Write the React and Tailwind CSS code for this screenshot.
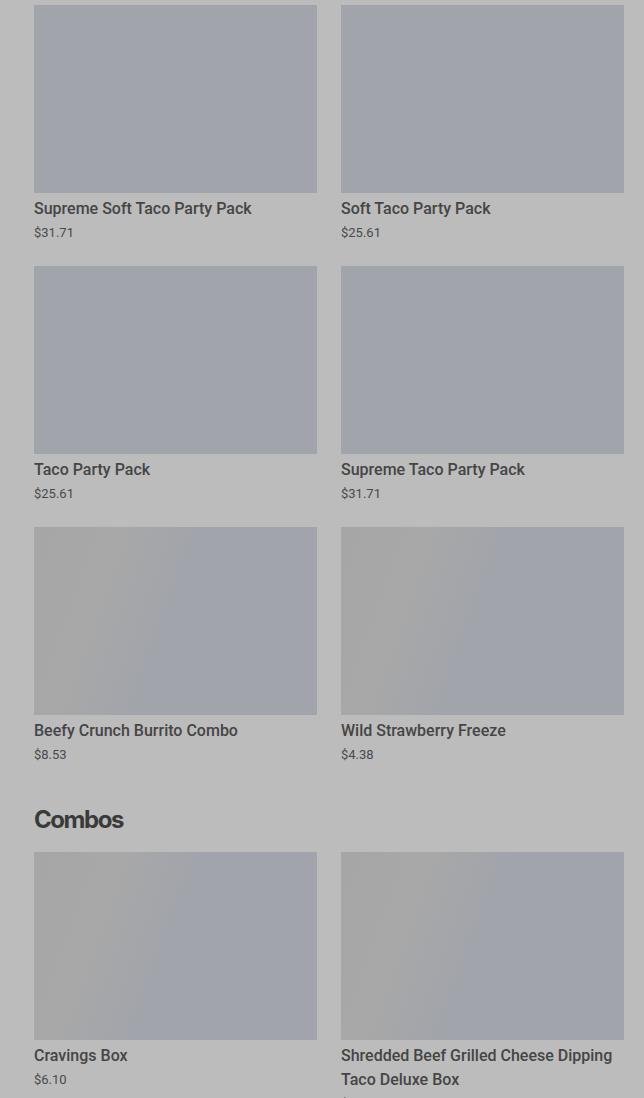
import React from 'react';

const deals = [
    { name: 'Supreme Soft Taco Party Pack', price: '$31.71' },
    { name: 'Soft Taco Party Pack', price: '$25.61' },
    { name: 'Taco Party Pack', price: '$25.61' },
    { name: 'Supreme Taco Party Pack', price: '$31.71' },
    { name: 'Beefy Crunch Burrito Combo', price: '$8.53', loading: true },
    { name: 'Wild Strawberry Freeze', price: '$4.38', loading: true },
];

const combos = [
    { name: 'Cravings Box', price: '$6.10', loading: true },
    { name: 'Shredded Beef Grilled Cheese Dipping Taco Deluxe Box', price: '$11.54', loading: true },
];

const ProductCard = ({ name, price, loading }) => (
    <div className="flex flex-col">
        <div
            className={`h-[188px] w-full ${
                loading
                    ? 'bg-[linear-gradient(110deg,#a6a6a6_0%,#a8a8a8_25%,#a1a4ab_48%,#a1a4ab_100%)]'
                    : 'bg-[#a1a4ab]'
            }`}
        />
        <p className="mt-1 font-['Roboto',sans-serif] text-[16px] leading-6 font-medium text-[#454545]">{name}</p>
        <p className="font-['Roboto',sans-serif] text-[13px] leading-6 text-[#4a4a4a]">{price}</p>
    </div>
);

const App = () => {
    return (
        <div className="min-h-[1098px] overflow-hidden bg-[#bcbcbc] pt-[5px] pl-[34px] pr-[20px] font-['Inter','Liberation_Sans',sans-serif]">
            <div className="grid grid-cols-2 gap-x-6 gap-y-[21px]">
                {deals.map((item) => (
                    <ProductCard key={item.name} {...item} />
                ))}
            </div>

            <h2 className="mt-[37px] mb-4 text-[24px] leading-8 font-bold tracking-[-0.06em] text-[#3a3a3a]">
                Combos
            </h2>

            <div className="grid grid-cols-2 gap-x-6 gap-y-[21px]">
                {combos.map((item) => (
                    <ProductCard key={item.name} {...item} />
                ))}
            </div>
        </div>
    );
};

export default App;
